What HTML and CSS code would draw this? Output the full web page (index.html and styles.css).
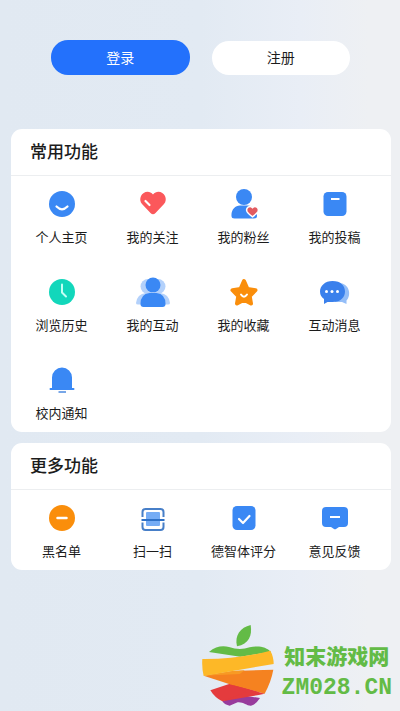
FILE: index.html
```html
<!DOCTYPE html>
<html lang="zh-CN">
<head>
<meta charset="utf-8">
<meta name="viewport" content="width=device-width, initial-scale=1">
<title>我的</title>
<link rel="stylesheet" href="styles.css">
</head>
<body>
<div class="account">
  <button class="btn btn-primary" type="button">登录</button>
  <button class="btn btn-plain" type="button">注册</button>
</div>
<main class="cards">
  <section class="card">
    <h2 class="card-title">常用功能</h2>
    <div class="grid">
      <a class="item" href="#"><svg class="icon" viewBox="0 0 36 32"><circle cx="18" cy="16" r="13" fill="#3a88f4"/><path d="M12.500 18.500q5.500 5.500 11 0" fill="none" stroke="#fff" stroke-width="2.200" stroke-linecap="round"/></svg><span>个人主页</span></a>
      <a class="item" href="#"><svg class="icon" viewBox="0 0 36 32"><path d="M18 6.500C21.500 2 28 3.500 30 8Q32 12.500 29 16L20.500 25Q18 27.500 15.500 25L7 16Q4 12.500 6 8C8 3.500 14.500 2 18 6.500Z" fill="#fb585b"/><path d="m10.500 13 4 4" stroke="#fff" stroke-width="2.200" stroke-linecap="round"/></svg><span>我的关注</span></a>
      <a class="item" href="#"><svg class="icon" viewBox="0 0 36 32"><circle cx="18" cy="9" r="8" fill="#3a88f4"/><path d="M5.500 28C5 22 9 17.500 14 17.500h8c5 0 9 4.500 9 10.500q0 2.500-3 2.500H8.500q-3 0-3-2.500Z" fill="#3a88f4"/><path d="M26.500 19.600c3-2.800 7 .4 5.500 3.900q-1 2-5.500 5.300-4.500-3.300-5.500-5.300c-1.500-3.500 2.500-6.700 5.500-3.900Z" fill="#e25b60" stroke="#fff" stroke-width="1.500"/></svg><span>我的粉丝</span></a>
      <a class="item" href="#"><svg class="icon" viewBox="0 0 36 32"><rect x="6.500" y="4" width="23" height="24" rx="4.500" fill="#3a88f4"/><path d="M14 11h8.500" stroke="#fff" stroke-width="2"/></svg><span>我的投稿</span></a>
      <a class="item" href="#"><svg class="icon" viewBox="0 0 36 32"><circle cx="18" cy="16" r="13" fill="#12d7bb"/><path d="M18 8.500v8l4 4" fill="none" stroke="#c4fff5" stroke-width="2" stroke-linecap="round" stroke-linejoin="round"/></svg><span>浏览历史</span></a>
      <a class="item" href="#"><svg class="icon" viewBox="0 0 36 32"><g fill="#b3d1fb"><circle cx="13" cy="10.500" r="7.500"/><circle cx="23" cy="10.500" r="7.500"/><path d="M1 27q1-9 10-10h14q9 1 10 10 0 1.500-2 1.500H3Q1 28.500 1 27Z"/></g><circle cx="18" cy="9" r="7.500" fill="#3a88f4"/><path d="M5.500 28q0-10 9-11h7q9 1 9 11 0 3-3 3h-19q-3 0-3-3Z" fill="#3a88f4"/></svg><span>我的互动</span></a>
      <a class="item" href="#"><svg class="icon" viewBox="0 0 36 32"><path d="m18 5 3.500 8 8 1.200-5.800 5.800 1.300 7.500-7-3.700-7 3.700 1.300-7.500-5.800-5.800 8-1.200Z" fill="#fa8e0b" stroke="#fa8e0b" stroke-width="4" stroke-linejoin="round"/><path d="M15 18.500q3 4.500 6 0" fill="none" stroke="#fff" stroke-width="2" stroke-linecap="round"/></svg><span>我的收藏</span></a>
      <a class="item" href="#"><svg class="icon" viewBox="0 0 36 32"><path d="M22 7c10 0 13 12 7.500 17.500V28l-4.500-2h-7V8Z" fill="#94bef8"/><path d="M15.500 5C24 5 28 10 28 15.500S24 26 15.500 26h-5L7 28v-5q-4-3-4-7.500C3 10 8 5 15.500 5Z" fill="#3a80ec"/><g fill="#fff"><circle cx="9.500" cy="15.500" r="1.500"/><circle cx="15" cy="15.500" r="1.500"/><circle cx="20.500" cy="15.500" r="1.500"/></g></svg><span>互动消息</span></a>
      <a class="item" href="#"><svg class="icon" viewBox="0 0 36 32"><path d="M8 24V13.500a10 10 0 0 1 20 0V24h1.500q1 0 1 1t-1 1h-23q-1 0-1-1t1-1Z" fill="#3a88f4"/><path d="M14.500 28h7.500" stroke="#78a7e8" stroke-width="2"/></svg><span>校内通知</span></a>
    </div>
  </section>
  <section class="card">
    <h2 class="card-title">更多功能</h2>
    <div class="grid">
      <a class="item" href="#"><svg class="icon" viewBox="0 0 36 32"><circle cx="18" cy="16" r="13" fill="#fa8e0b"/><path d="M13.500 16h9" stroke="#fff" stroke-width="2.500" stroke-linecap="round"/></svg><span>黑名单</span></a>
      <a class="item" href="#"><svg class="icon" viewBox="0 0 36 32"><rect x="11" y="10" width="14" height="14" rx="1" fill="#75acf5"/><path d="M7.500 15v-5q0-3 3-3H12M24 7h1.500q3 0 3 3v5M28.500 20.500V25q0 3-3 3H24M12 28h-1.500q-3 0-3-3v-4.500M12 7h12M12 28h12" fill="none" stroke="#477fc8" stroke-width="2"/><path d="M6.500 18h23" stroke="#2d70c7" stroke-width="2"/></svg><span>扫一扫</span></a>
      <a class="item" href="#"><svg class="icon" viewBox="0 0 36 32"><rect x="6.500" y="4" width="23" height="24" rx="4.500" fill="#3a88f4"/><path d="m13 17 4 4 6.500-7" fill="none" stroke="#fff" stroke-width="2.200" stroke-linecap="round" stroke-linejoin="round"/></svg><span>德智体评分</span></a>
      <a class="item" href="#"><svg class="icon" viewBox="0 0 36 32"><path d="M9 5h18q4 0 4 4v12q0 4-4 4h-5l-3 2q-1 .6-2 0l-3-2H9q-4 0-4-4V9q0-4 4-4Z" fill="#3a88f4"/><path d="M13 15h10" stroke="#fff" stroke-width="2"/></svg><span>意见反馈</span></a>
    </div>
  </section>
</main>
<footer class="brand">
  <svg class="brand-logo" viewBox="17 10 216 246">
    <path d="M122 77C114 45 132 20 163 13C168 45 158 70 122 77Z" fill="#63bb46"/>
    <path d="M38 94C58 76 80 74 98 79Q130 91 160 80C185 74 210 78 224 94L132 108Z" fill="#63bb46"/>
    <path d="M78 242 125 222 191 232Q178 252 164 255C152 256 140 243 124 245Q108 252 100 255Q86 253 78 242Z" fill="#983b9c"/>
    <path d="M42 209 105 188 187 214 78 242Q56 232 42 209Z" fill="#e43b3d"/>
    <path d="M22 165 110 151 231 147Q224 184 205 219L105 192Z" fill="#f58220"/>
    <path d="M22 165 110 151 145 149 130 160Z" fill="#f89a24"/>
    <path d="M105 192 205 219 187 223 78 242 150 214Z" fill="#e43b3d"/>
    <path d="M18 115Q125 116 222 90Q232 108 232 130L22 166Q16 140 18 115Z" fill="#fdb827"/>
  </svg>
  <div class="brand-text">
    <span class="brand-name">知末游戏网</span>
    <span class="brand-domain">ZM028.CN</span>
  </div>
</footer>
</body>
</html>
```
FILE: styles.css
```css
* {
  box-sizing: border-box;
}

body {
  margin: 0;
  min-height: 100vh;
  display: flex;
  flex-direction: column;
  background: linear-gradient(90deg, #e1e9f2 0%, #e2eaf3 50%, #e9eef6 75%, #eef0f3 92%);
  color: #1c1c1c;
  font-family: "Noto Sans CJK SC", sans-serif;
}

.account {
  display: flex;
  align-items: center;
  gap: 22px;
  padding: 40px 50px 0 51px;
}

.btn {
  flex: 1;
  height: 34px;
  padding: 0 0 2px;
  border: 0;
  border-radius: 17px;
  font: 14px/20px "Noto Sans CJK SC", sans-serif;
}

.btn-primary {
  height: 35px;
  background: #2371fc;
  color: #fff;
}

.btn-plain {
  background: #fff;
  color: #1c1c1c;
}

.cards {
  display: flex;
  flex-direction: column;
  gap: 11px;
  padding: 54px 9px 0 11px;
}

.card {
  background: #fff;
  border-radius: 11px;
}

.card-title {
  margin: 0;
  padding: 10px 19px 12px;
  border-bottom: 1px solid #eceef0;
  font-size: 17px;
  line-height: 24px;
  font-weight: 500;
}

.grid {
  display: grid;
  grid-template-columns: repeat(4, 1fr);
  row-gap: 29px;
  padding: 12px 11px 9px 5px;
}

.item {
  display: flex;
  flex-direction: column;
  align-items: center;
  gap: 7px;
  color: inherit;
  font-size: 13px;
  line-height: 20px;
  text-decoration: none;
  white-space: nowrap;
}

.icon {
  width: 36px;
  height: 32px;
}

.brand {
  display: flex;
  justify-content: flex-end;
  align-items: center;
  gap: 8px;
  margin-top: auto;
  padding: 0 8px 5px 0;
  color: #63bb46;
}

.brand-logo {
  width: 72px;
  height: 82px;
}

.brand-text {
  display: flex;
  flex-direction: column;
  align-items: center;
  gap: 8px;
  padding-top: 12px;
}

.brand-name {
  font-size: 21px;
  line-height: 26px;
  font-weight: 900;
}

.brand-domain {
  font: bold 23px/24px "Liberation Mono", monospace;
}
```
